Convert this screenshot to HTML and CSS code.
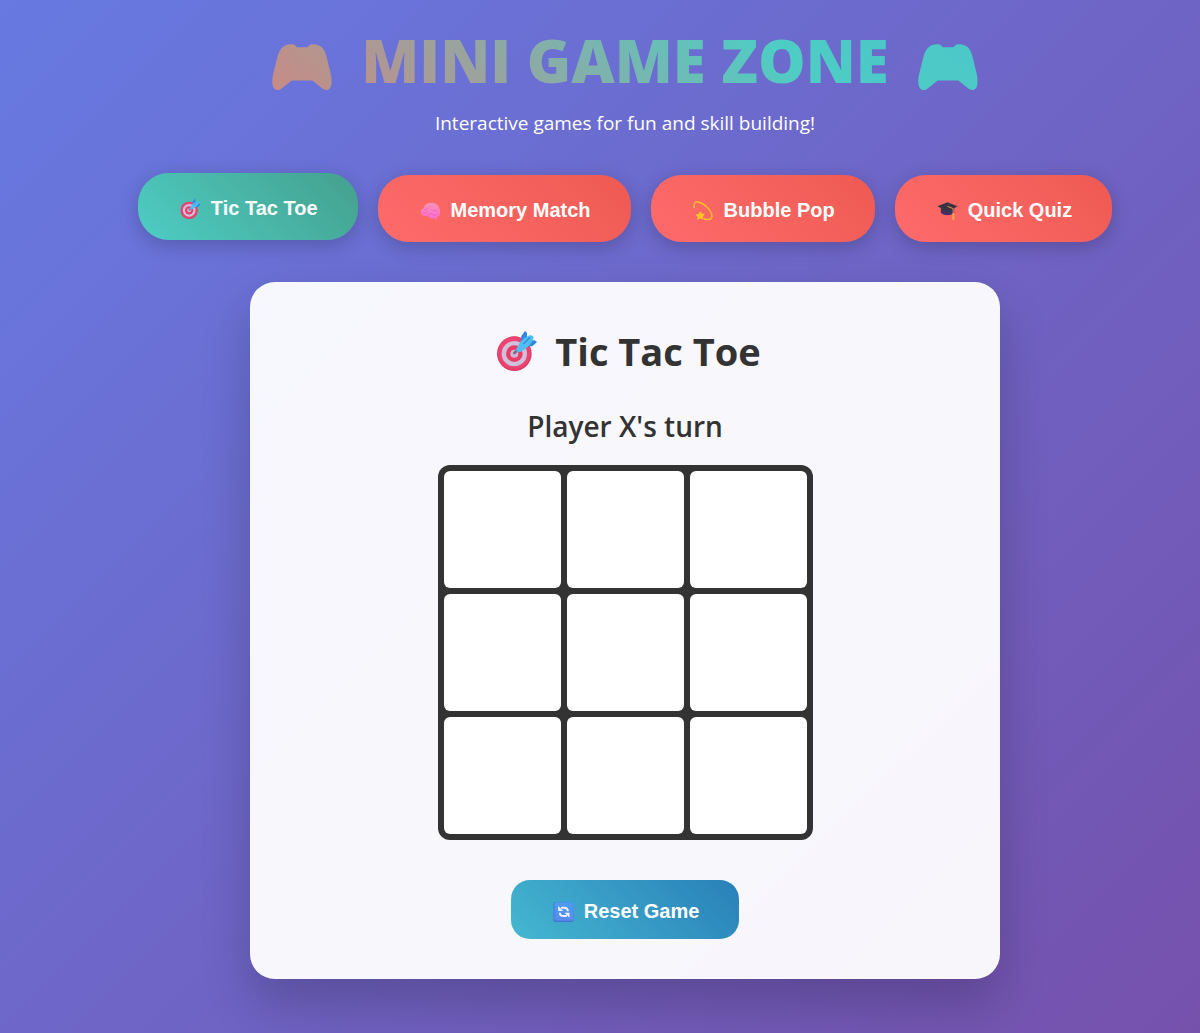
FILE: index.html
```html
<!DOCTYPE html>
<html lang="en">
<head>
<meta charset="utf-8">
<meta name="viewport" content="width=device-width, initial-scale=1">
<title>Mini Game Zone</title>
<link rel="stylesheet" href="styles.css">
</head>
<body>
<svg class="sprites" width="0" height="0" aria-hidden="true">
  <defs>
    <linearGradient id="pad-warm" x1="0" y1="1" x2="1" y2="0"><stop offset="0" stop-color="#c88b86"/><stop offset="1" stop-color="#b0978f"/></linearGradient>
    <linearGradient id="pad-cool" x1="0" y1="1" x2="1" y2="0"><stop offset="0" stop-color="#4dcbc6"/><stop offset="1" stop-color="#4cc7c9"/></linearGradient>
    <linearGradient id="brain-fill" x1="0" y1="0" x2="0" y2="1"><stop offset="0" stop-color="#f792b4"/><stop offset="1" stop-color="#ff67d5"/></linearGradient>
    <linearGradient id="cap-fill" x1="0" y1="0" x2="0" y2="1"><stop offset="0" stop-color="#3d3444"/><stop offset="1" stop-color="#4b2b72"/></linearGradient>
    <linearGradient id="reset-fill" x1="0" y1="0" x2="0" y2="1"><stop offset="0" stop-color="#4c9df2"/><stop offset="1" stop-color="#568bee"/></linearGradient>
  </defs>
  <symbol id="gamepad" viewBox="0 0 180 140">
    <path d="M66 1L75 9H106L115 1C124 0 132 0 139 3C153 8 160 22 164 39L176 89C179 103 181 122 174 132C168 139 160 139 152 134L121 109H59L29 133C21 140 12 139 6 132C-1 124 0 105 3 92L16 39C20 22 29 8 41 3C49 0 57 0 66 1Z"/>
  </symbol>
  <symbol id="target" viewBox="0 0 120 120">
    <circle cx="52" cy="68" r="52" fill="#df3a66"/>
    <circle cx="52" cy="66" r="49" fill="#ec4370"/>
    <circle cx="52" cy="68" r="38" fill="#cfc0dc"/>
    <circle cx="52" cy="68" r="25" fill="#e93c68"/>
    <circle cx="52" cy="68" r="12" fill="#cfb6d2"/>
    <path d="M52 66L66 54" stroke="#756b86" stroke-width="8" stroke-linecap="round"/>
    <path d="M72 30L73 15L84 0L90 6V30ZM90 46L106 46L120 33L113 28L91 30Z" fill="#2e86e5"/>
    <path d="M58 53L70 32Q85 18 98 13Q108 12 110 20Q106 35 90 50L72 62Q55 66 58 53Z" fill="#54bdf0"/>
    <path d="M80 38L98 20" stroke="#2d91e4" stroke-width="4" stroke-linecap="round"/>
  </symbol>
  <symbol id="brain" viewBox="0 0 60 60">
    <path d="M2 38C-1 29 5 24 9 22C10 12 21 5 30 6C43 2 58 14 58 29C61 39 56 46 49 48L48 58L41 51C30 54 22 48 20 43C12 47 4 43 2 38Z" fill="url(#brain-fill)"/>
    <path d="M10 26Q18 29 22 22M7 36Q15 38 20 32M22 42Q30 33 39 42Q47 46 53 37M38 28Q44 33 50 29" fill="none" stroke="#e45cae" stroke-width="2" stroke-linecap="round"/>
  </symbol>
  <symbol id="dizzy" viewBox="0 0 60 60">
    <path d="M2 20Q0 1 13 3C35 7 58 33 55 49Q51 59 32 54" fill="none" stroke="#f7c51f" stroke-width="4" stroke-linecap="round"/>
    <path d="M20 33L23 39L31 40L26 46L28 53L20 50L13 54L15 47L9 42L17 40Z" fill="#ffc526" stroke="#ffc526" stroke-width="4" stroke-linejoin="round"/>
  </symbol>
  <symbol id="cap" viewBox="0 0 60 60">
    <path d="M10 22H50V36Q40 43 30 43Q17 43 10 36Z" fill="url(#cap-fill)"/>
    <path d="M0 16L30 4L60 16L31 33Z" fill="#3c3342"/>
    <path d="M30 16L47 23V38" fill="none" stroke="#d99a51" stroke-width="3"/>
    <path d="M45 36H50L51 56H44Z" fill="#f2a44d"/>
  </symbol>
  <symbol id="reset" viewBox="0 0 60 60">
    <rect width="60" height="60" rx="5" fill="#4473d1"/>
    <rect x="3" y="1" width="57" height="55" rx="4" fill="url(#reset-fill)"/>
    <path d="M23 17H32Q43 17 43 28M40 42H30Q19 42 19 32" fill="none" stroke="#f4f0ff" stroke-width="6"/>
    <path d="M14 12V27H29ZM48 47V32H33Z" fill="#f4f0ff"/>
  </symbol>
</svg>

<header class="header">
  <h1 class="title">
    <svg class="title-icon title-icon-warm" aria-hidden="true"><use href="#gamepad"/></svg>
    <span>MINI GAME ZONE</span>
    <svg class="title-icon title-icon-cool" aria-hidden="true"><use href="#gamepad"/></svg>
  </h1>
  <p class="subtitle">Interactive games for fun and skill building!</p>
</header>

<nav class="tabs" aria-label="Games">
  <button class="btn tab tab-active" type="button"><svg class="icon" aria-hidden="true"><use href="#target"/></svg>Tic Tac Toe</button>
  <button class="btn tab" type="button"><svg class="icon" aria-hidden="true"><use href="#brain"/></svg>Memory Match</button>
  <button class="btn tab" type="button"><svg class="icon" aria-hidden="true"><use href="#dizzy"/></svg>Bubble Pop</button>
  <button class="btn tab" type="button"><svg class="icon" aria-hidden="true"><use href="#cap"/></svg>Quick Quiz</button>
</nav>

<main class="card">
  <h2 class="game-title"><svg class="game-icon" aria-hidden="true"><use href="#target"/></svg>Tic Tac Toe</h2>
  <p class="status" role="status">Player X's turn</p>
  <div class="board">
    <button class="cell" type="button" aria-label="Row 1, column 1"></button>
    <button class="cell" type="button" aria-label="Row 1, column 2"></button>
    <button class="cell" type="button" aria-label="Row 1, column 3"></button>
    <button class="cell" type="button" aria-label="Row 2, column 1"></button>
    <button class="cell" type="button" aria-label="Row 2, column 2"></button>
    <button class="cell" type="button" aria-label="Row 2, column 3"></button>
    <button class="cell" type="button" aria-label="Row 3, column 1"></button>
    <button class="cell" type="button" aria-label="Row 3, column 2"></button>
    <button class="cell" type="button" aria-label="Row 3, column 3"></button>
  </div>
  <button class="btn reset" type="button"><svg class="icon" aria-hidden="true"><use href="#reset"/></svg>Reset Game</button>
</main>
</body>
</html>
```
FILE: styles.css
```css
* {
  box-sizing: border-box;
}

html {
  min-height: 100%;
  background: linear-gradient(135deg, #677ae2 0%, #7551ac 100%) no-repeat;
}

body {
  margin: 0;
  padding: 20px 24px 54px 74px;
  font-family: "Segoe UI", "Open Sans", "Noto Sans", sans-serif;
  color: #333;
}

h1, h2, p {
  margin: 0;
}

.sprites {
  display: block;
}

.header {
  text-align: center;
}

.title {
  display: flex;
  justify-content: center;
  align-items: center;
  gap: 29px;
  font-size: 60px;
  font-weight: 800;
  line-height: 80px;
  color: transparent;
  background: linear-gradient(45deg, #ff6b6b 0%, #4ecdc4 64%, #45b7d1 100%);
  background-clip: text;
  -webkit-background-clip: text;
}

.title-icon {
  width: 60px;
  height: 47px;
  margin-top: 15px;
}

.title-icon-warm {
  fill: url(#pad-warm);
}

.title-icon-cool {
  fill: url(#pad-cool);
}

.subtitle {
  margin-top: 10px;
  font-size: 19px;
  line-height: 26px;
  color: #fff;
}

.tabs {
  display: flex;
  flex-wrap: wrap;
  justify-content: center;
  gap: 20px;
  margin: 39px 0 40px;
}

.btn {
  display: flex;
  align-items: center;
  gap: 10px;
  border: 0;
  padding: 24px 40px 20px 42px;
  font-family: "Liberation Sans", Arial, sans-serif;
  font-size: 20px;
  font-weight: 700;
  line-height: 23px;
  color: #fff;
  cursor: pointer;
}

.icon {
  width: 21px;
  height: 20px;
}

.tab {
  border-radius: 31px;
  background: linear-gradient(45deg, #ff6b6b, #ee5a52);
  box-shadow: 0 5px 19px rgba(0, 0, 0, 0.2);
}

.tab-active {
  background: linear-gradient(45deg, #4ecdc4, #44a08d);
  transform: translateY(-2px);
}

.card {
  display: flex;
  flex-direction: column;
  align-items: center;
  max-width: 750px;
  margin: 0 auto;
  padding: 40px;
  border-radius: 25px;
  background: rgba(255, 255, 255, 0.95);
  box-shadow: 0 25px 50px rgba(0, 0, 0, 0.2);
}

.game-title {
  display: flex;
  align-items: center;
  gap: 18px;
  padding-left: 8px;
  font-size: 38px;
  line-height: 58px;
}

.game-icon {
  width: 40px;
  height: 40px;
}

.status {
  margin: 26px 0 19px;
  font-size: 28px;
  font-weight: 600;
  line-height: 40px;
}

.board {
  display: grid;
  grid-template-columns: repeat(3, 1fr);
  gap: 6px;
  width: 100%;
  max-width: 375px;
  padding: 6px;
  border-radius: 12px;
  background: #333;
}

.cell {
  aspect-ratio: 1;
  border: 0;
  border-radius: 6px;
  padding: 0;
  background: #fff;
  cursor: pointer;
}

.reset {
  margin-top: 40px;
  padding: 20px 40px 16px 42px;
  border-radius: 19px;
  background: linear-gradient(45deg, #45b7d1, #2980b9);
}
```
